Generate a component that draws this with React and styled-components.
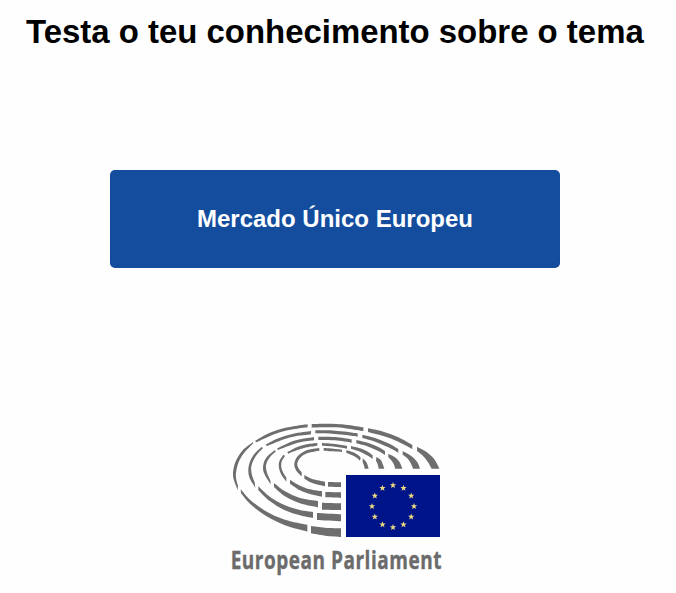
import React from "react";
import styled, { createGlobalStyle } from "styled-components";

const GlobalStyle = createGlobalStyle`
  body {
    margin: 0;
    background: #fefefe;
    font-family: "Liberation Sans", Arial, sans-serif;
  }
`;

const Page = styled.main`
  display: flex;
  flex-direction: column;
  align-items: flex-start;
  min-height: 593px;
`;

const Title = styled.h1`
  margin: 12px 0 0 26px;
  font-size: 32.93px;
  line-height: 40px;
  font-weight: 700;
  color: #000;
  white-space: nowrap;
`;

const TopicButton = styled.button`
  width: 450px;
  height: 98px;
  margin: 118px 0 0 110px;
  padding: 0;
  border: 0;
  border-radius: 5px;
  background: #144d9e;
  color: #fff;
  font: 700 24px "Liberation Sans", Arial, sans-serif;
`;

const Logo = styled.svg`
  display: block;
  flex: none;
  width: 225px;
  height: 175px;
  margin: 150px 0 0 225px;
  overflow: visible;
`;

const LogoText = styled.text`
  font-family: "Open Sans", "Noto Sans", sans-serif;
  font-weight: 700;
  font-size: 75px;
  fill: #6b6b6b;
  stroke: #6b6b6b;
  stroke-width: 1.2px;
`;

// Each seat block is a pair of edges: outer points, then inner points,
// both listed from one end of the block to the other.
const BLOCKS = [
  // first row
  [[[83,73],[52,98],[32,130],[24,165],[28,190],[38,216]], [[85,76],[59,103],[41,132],[33,165],[34,185],[39,203]]],
  [[[90,69],[125,49],[165,34],[205,25],[248,19]], [[94,73],[130,56],[165,43],[205,34],[248,28]]],
  [[[260,18],[300,17],[335,18],[370,21],[415,28]], [[260,29],[300,28],[335,28],[370,32],[415,39]]],
  [[[429,31],[475,41],[520,58],[562,81]], [[429,42],[475,54],[520,71],[562,93]]],
  [[[576,86],[605,102],[628,124],[643,152]], [[576,99],[592,112],[608,131],[620,152]]],
  [[[48,226],[75,257],[120,292],[180,322],[247,341]], [[47,214],[75,245],[120,278],[180,305],[247,320]]],
  [[[258,346],[300,353],[348,357]], [[258,324],[300,329],[348,331]]],
  // second row
  [[[110,87],[85,112],[71,145],[73,178],[91,209]], [[114,90],[92,115],[79,145],[81,172],[89,193]]],
  [[[122,80],[160,61],[205,47],[258,39]], [[126,84],[165,68],[205,56],[258,49]]],
  [[[271,37],[300,37],[330,38],[365,41],[398,46]], [[271,46],[300,46],[330,48],[365,51],[398,56]]],
  [[[412,50],[450,60],[490,76],[520,93]], [[412,60],[450,71],[490,88],[520,104]]],
  [[[533,99],[560,115],[577,133],[585,152]], [[533,110],[547,121],[558,137],[564,152]]],
  [[[100,217],[135,250],[180,277],[225,292],[264,300]], [[100,205],[135,237],[180,262],[225,276],[264,282]]],
  [[[276,306],[348,310]], [[276,285],[348,289]]],
  // third row
  [[[149,97],[125,118],[115,140],[117,165],[137,199]], [[153,100],[133,120],[123,142],[126,164],[136,187]]],
  [[[156,92],[190,75],[225,64],[267,57]], [[159,96],[190,84],[225,73],[267,67]]],
  [[[280,56],[330,57],[380,64]], [[280,66],[330,67],[380,74]]],
  [[[394,66],[430,75],[460,87],[480,99]], [[394,76],[430,86],[460,99],[480,111]]],
  [[[490,107],[510,118],[524,133],[532,152]], [[490,118],[504,134],[511,152]]],
  [[[147,207],[180,235],[225,256],[279,268]], [[147,195],[180,220],[225,240],[279,249]]],
  [[[291,275],[348,276]], [[291,254],[348,256]]],
  // fourth row
  [[[175,110],[163,130],[162,150],[170,172],[184,191]], [[180,114],[170,131],[169,148],[174,163],[184,179]]],
  [[[187,103],[215,88],[245,79],[277,75]], [[190,107],[215,97],[245,88],[277,83]]],
  [[[291,75],[330,78],[366,84]], [[291,83],[330,86],[366,92]]],
  [[[378,84],[405,91],[430,102],[443,112]], [[378,92],[405,101],[430,114],[443,123]]],
  [[[454,117],[468,127],[478,152]], [[453,128],[458,139],[461,152]]],
  [[[195,197],[225,217],[255,228],[291,236]], [[195,185],[225,203],[255,214],[291,220]]],
  [[[301,238],[348,240]], [[301,222],[348,223]]],
  // fifth row
  [[[283,90],[245,97],[218,115],[208,138],[214,158],[230,175]], [[283,98],[248,105],[226,119],[217,136],[220,150],[230,163]]],
  [[[296,90],[325,92],[351,95]], [[296,98],[325,100],[351,102]]],
  [[[364,97],[385,103],[400,112],[407,119]], [[364,105],[380,111],[395,119],[405,128]]],
  [[[413,121],[425,134],[431,152]], [[413,133],[417,143],[419,152]]],
  [[[238,182],[262,195],[300,205]], [[238,171],[262,183],[300,191]]],
  [[[309,206],[348,207]], [[309,192],[348,193]]],
];

// Cubic segments through every point (Catmull-Rom).
function curve(points) {
  let d = "";
  for (let i = 0; i < points.length - 1; i++) {
    const a = points[i - 1] || points[i];
    const b = points[i];
    const c = points[i + 1];
    const e = points[i + 2] || c;
    d += `C${b[0] + (c[0] - a[0]) / 6} ${b[1] + (c[1] - a[1]) / 6} ${c[0] - (e[0] - b[0]) / 6} ${c[1] - (e[1] - b[1]) / 6} ${c[0]} ${c[1]}`;
  }
  return d;
}

function blockPath([outer, inner]) {
  const back = [...inner].reverse();
  return `M${outer[0]}${curve(outer)}L${back[0]}${curve(back)}Z`;
}

function starPoints(cx, cy, r) {
  return Array.from({ length: 10 }, (_, i) => {
    const radius = i % 2 ? r * 0.42 : r;
    const angle = (i * Math.PI) / 5;
    return `${cx + radius * Math.sin(angle)},${cy - radius * Math.cos(angle)}`;
  }).join(" ");
}

const STARS = Array.from({ length: 12 }, (_, i) => {
  const angle = (i * Math.PI) / 6;
  return [504 + 63 * Math.sin(angle), 265 - 63 * Math.cos(angle)];
});

function ParliamentLogo() {
  return (
    <Logo viewBox="0 0 675 525" role="img" aria-label="European Parliament">
      <path d={BLOCKS.map(blockPath).join("")} fill="#6e6e6e" />
      <rect x="363" y="171" width="282" height="186" fill="#001489" />
      {STARS.map(([x, y], i) => (
        <polygon key={i} points={starPoints(x, y, 10)} fill="#ead982" />
      ))}
      <LogoText
        transform="translate(17 452) scale(0.76 1)"
        textLength="832"
        lengthAdjust="spacing"
      >
        European Parliament
      </LogoText>
    </Logo>
  );
}

export default function App() {
  return (
    <>
      <GlobalStyle />
      <Page>
        <Title>Testa o teu conhecimento sobre o tema</Title>
        <TopicButton type="button">Mercado Único Europeu</TopicButton>
        <ParliamentLogo />
      </Page>
    </>
  );
}
